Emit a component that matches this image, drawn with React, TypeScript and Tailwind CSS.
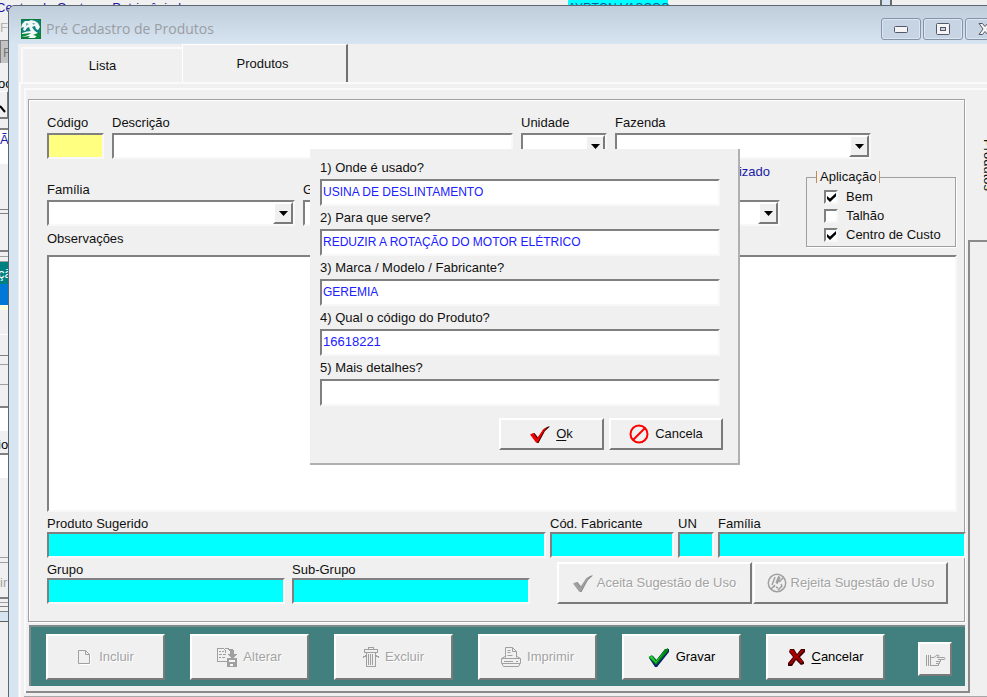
import type { ReactNode } from "react";

const sunken =
  "border-2 border-t-[#808080] border-l-[#808080] border-r-[#f8f8f8] border-b-[#f8f8f8]";
const raised =
  "border-2 border-t-white border-l-white border-r-[#7a7a7a] border-b-[#7a7a7a]";

type FieldProps = {
  id: string;
  label: string;
  className?: string;
  tone?: string;
};

function Field({ id, label, className = "", tone = "bg-white" }: FieldProps) {
  return (
    <div className={`flex flex-col ${className}`}>
      <label htmlFor={id} className="h-4 whitespace-nowrap">
        {label}
      </label>
      <input id={id} type="text" className={`h-[26px] w-full min-w-0 outline-none ${sunken} ${tone}`} />
    </div>
  );
}

function SelectField({ id, label, className = "" }: FieldProps) {
  return (
    <div className={`flex flex-col gap-0.5 ${className}`}>
      <label htmlFor={id} className="h-4 whitespace-nowrap">
        {label}
      </label>
      <div className="relative">
        <select
          id={id}
          defaultValue=""
          className={`block h-[26px] w-full appearance-none rounded-none bg-white outline-none ${sunken}`}
        >
          <option value=""></option>
        </select>
        <span
          className={`pointer-events-none absolute top-0.5 right-0.5 bottom-0.5 flex w-5 items-center justify-center bg-[#f0f0f0] ${raised}`}
        >
          <svg width="9" height="5" viewBox="0 0 9 5">
            <path d="M0 0h9L4.5 5z" fill="#000" />
          </svg>
        </span>
      </div>
    </div>
  );
}

function CheckBox({ id, label, checked }: { id: string; label: string; checked: boolean }) {
  return (
    <div className="flex h-[19px] items-center gap-2">
      <span className="relative flex">
        <input
          id={id}
          type="checkbox"
          defaultChecked={checked}
          className={`peer block h-[14px] w-[14px] appearance-none bg-white ${sunken}`}
        />
        <svg
          className="pointer-events-none absolute top-[3px] left-[3px] hidden peer-checked:block"
          width="9"
          height="9"
          viewBox="0 0 9 9"
        >
          <path d="M0 3l3 2.6L9 0v3.2L3 9 0 6z" fill="#000" />
        </svg>
      </span>
      <label htmlFor={id}>{label}</label>
    </div>
  );
}

function BarButton({ icon, children, disabled }: { icon: ReactNode; children: ReactNode; disabled?: boolean }) {
  return (
    <button
      type="button"
      disabled={disabled}
      className={`flex h-[46px] w-[119px] items-center justify-center gap-1.5 bg-[#f0f0f0] text-black disabled:text-[#a3a3a3] disabled:[text-shadow:1px_1px_0_#fff] ${raised}`}
    >
      {icon}
      <span>{children}</span>
    </button>
  );
}

function PageIcon() {
  return (
    <svg width="16" height="16" viewBox="0 0 16 16" fill="none" stroke="#a0a0a0">
      <path d="M1.5 1.500h7l4 4v9h-11zM8.500 1.500v4h4" />
      <path d="M2.500 15.500h11v-10" stroke="#fff" />
    </svg>
  );
}

function AlterIcon() {
  return (
    <svg width="20" height="20" viewBox="0 0 20 20" fill="none" stroke="#a0a0a0" shapeRendering="crispEdges">
      <path d="M10 14.500H.5v-13h6l1 1 1-1h3" />
      <path d="M2 4.500h2M5 4.500h2M2 7.500h3M6 7.500h3M2 10.500h2M5 10.500h3M8.500 3v3" />
      <path d="M11 2h4l2 2v3h3l-5 5-5-5h3V5z" fill="#a0a0a0" stroke="none" />
      <path d="M10 11h10v9H10z" fill="#a0a0a0" stroke="none" />
      <path d="M12 13h6v2h-6zM13 17h3v2h-3z" fill="#f6f6f6" stroke="none" />
    </svg>
  );
}

function TrashIcon() {
  return (
    <svg width="16" height="20" viewBox="0 0 16 20" fill="none" stroke="#a0a0a0" shapeRendering="crispEdges">
      <path d="M5.500 2.500v-2h5v2M1.500 2.500h13v3h-13zM3.500 6v13.500h9V6M5.500 7v11M7.500 7v11M9.500 7v11" />
      <path d="M2.500 8v1h-2v2M13.500 8v1h2v2" />
    </svg>
  );
}

function PrinterIcon() {
  return (
    <svg width="20" height="20" viewBox="0 0 20 20" fill="none" stroke="#a0a0a0">
      <path d="M4.500 10.500v-10h7l4 4v6M11.500.5v4h4M6.500 3.500h3M6.500 5.500h3M6.500 8.500h5M4 9.500l-3.500 2h19l-3.500-2M.5 11.500v5h19v-5M1.500 16.500v1.500l1 1.500h15l1-1.500v-1.500M3 14.500h9M15 14.500h2" />
    </svg>
  );
}

function GreenCheck() {
  return (
    <svg width="22" height="20" viewBox="0 0 22 20">
      <path d="M1 11l4-2 3.500 4L17 2l4 0v3L9 20H7z" fill="#08206a" />
      <path d="M.5 10L4 8l4 5.500L17 2.500l3-1.500v3L8 18z" fill="#008a10" />
      <path d="M1 10l3-1 4 5.500L18 2.500 8 16z" fill="#20d030" />
    </svg>
  );
}

function RedCross() {
  return (
    <svg width="18" height="18" viewBox="0 0 18 18">
      <path d="M3 1h4l3 5 4-5h4v3l-5 5 4 5v2l-3 1-5-5-4 6H1v-3l5-6-4-5z" fill="#400000" />
      <path d="M3 2l3-.5 4 6 4.500-5.500H17l-5.500 6.500L16 14l-2 1-5-5-4.500 6L2 16l5-7-4-5z" fill="#a80000" />
    </svg>
  );
}

function HandIcon() {
  return (
    <svg width="21" height="14" viewBox="0 0 21 14" fill="none" stroke="#a0a0a0">
      <path d="M1.500 1v11M3.500 1v11M5.500 1v11M6 3.500h3l3-2.500 2 .5-2 2h7.500l.5 1-.5 1H13M6 11.500h7.500v-2H11M13.500 9.500h1v-2H11M14.500 7.500h1v-2" />
    </svg>
  );
}

function SlimCheck({ dark, light }: { dark: string; light: string }) {
  return (
    <svg width="20" height="17" viewBox="0 0 20 17">
      <path d="M1 8.500L4.500 7 8 11.500 14 3l4-2.500h2L15 5 8.500 17H7z" fill={dark} />
      <path d="M0 8.500L3.500 7 7 12.500l6-9 4-2.500-3 4-6.500 11.500H6z" fill={light} />
    </svg>
  );
}

function ForbiddenIcon() {
  return (
    <svg width="20" height="20" viewBox="0 0 20 20" fill="none" stroke="#f00" strokeWidth="2">
      <circle cx="10" cy="10" r="8.500" />
      <path d="M4 16L16 4" />
    </svg>
  );
}

function RejectIcon() {
  return (
    <svg width="20" height="20" viewBox="0 0 20 20" fill="none" stroke="#a0a0a0" strokeWidth="1.500">
      <circle cx="10" cy="10" r="8.700" />
      <path d="M4 16L8 12M12 9l4-4M12 3L9 10M13 4l-3 7M8 4L5 12M6 14l2-1M9 14l2 1M14 11l1 2-4 4" />
    </svg>
  );
}

function AppIcon() {
  return (
    <svg width="20" height="20" viewBox="0 0 20 20">
      <path d="M0 0h20v20H0z" fill="#0a7d38" />
      <path d="M1 1h18v13H1z" fill="#127f80" />
      <path d="M1 5l3-3 4 0 2-1 4 1 3 2 2 4-2 3-2-1-1-3-3 1 2 3 2 2-3 1-3-3-1-3-2 1-2 3-2-1 1-3-3 1z" fill="#f1f8f6" />
      <path d="M5 4l3 1-3 2zM11 4l3 0-1 2z" fill="#6fb3b0" />
      <path d="M1 14c6-2 11-3 16 0l-5 2 4 1-2 2H7l2-2-8 1z" fill="#f4faf6" />
      <path d="M1 15l9-1-3 2-6 2zM14 16l5-2v5h-5l2-2z" fill="#0a8a3c" />
    </svg>
  );
}

type Strip = { h: string; look: string; text?: string };

const strips: Strip[] = [
  { h: "h-[24px]", look: "pt-1 text-[#b4b4b4]", text: "Fi" },
  { h: "h-[23px]", look: "bg-[#c3c3c3] border-t border-l border-[#808080] pl-0.5 pt-1 text-[#777]", text: "F" },
  { h: "h-[13px]", look: "bg-[#f0f0f0]" },
  { h: "h-[15px]", look: "text-black -indent-0.5", text: "oc" },
  { h: "h-[28px]", look: "border-t border-t-white border-r-2 border-b-2 border-[#7a7a7a]", text: "" },
  { h: "h-[9px]", look: "bg-[#f0f0f0]" },
  { h: "h-[36px]", look: "bg-white border-t-2 border-[#808080] pt-0.5 text-[#1a1aa6]", text: "Ã" },
  { h: "h-[46px]", look: "border-b border-[#808080]" },
  { h: "h-[4px]", look: "border-b border-[#808080]" },
  { h: "h-[38px]", look: "border-b-2 border-[#808080]" },
  { h: "h-[5px]", look: "border-b border-[#a0a0a0]" },
  { h: "h-[5px]", look: "border-b border-[#a0a0a0]" },
  { h: "h-[22px]", look: "bg-[#008080] text-white pt-1 -indent-0.5", text: "çã" },
  { h: "h-[21px]", look: "bg-[#0078d7]" },
  { h: "h-[5px]", look: "bg-[#ffffe1]" },
  { h: "h-[25px]", look: "border-b border-white" },
  { h: "h-[21px]", look: "border-b border-[#808080]" },
  { h: "h-[9px]", look: "border-b border-[#a0a0a0]" },
  { h: "h-[20px]", look: "border-b border-[#a0a0a0]" },
  { h: "h-[23px]", look: "border-b-2 border-[#808080]" },
  { h: "h-[23px]", look: "bg-white" },
  { h: "h-[6px]", look: "bg-[#f0f0f0]" },
  { h: "h-[18px]", look: "border-b-2 border-[#808080] text-black -indent-0.5", text: "io" },
  { h: "h-[23px]", look: "bg-white" },
  { h: "h-[80px]", look: "border-b border-[#a0a0a0]" },
  { h: "h-[5px]", look: "border-b border-[#a0a0a0]" },
  { h: "h-[36px]", look: "border-b-2 border-[#808080] pt-3 text-[#a0a0a0]", text: "ir" },
  { h: "h-[4px]", look: "border-b border-[#a0a0a0]" },
  { h: "h-[4px]", look: "border-b border-[#808080]" },
  { h: "h-[5px]", look: "border-b border-[#808080]" },
  { h: "h-[10px]", look: "bg-[#d7e4f2] border-b border-[#606060]" },
];

function BackWindow() {
  return (
    <div className="flex h-full flex-col bg-[#f0f0f0]">
      <div className="flex h-4 shrink-0 leading-4 text-[#1a1aa6]">
        <span className="-ml-1 w-[572px] whitespace-nowrap">Centro de Custo ou Patrimônio |</span>
        <span className="h-4 w-[100px] bg-[#00ffff] text-[12px] whitespace-nowrap text-[#0a5aa0]">
          AYRTON VASCOS
        </span>
        <span className="ml-auto h-4 w-3 border-x-2 border-[#6b6b6b] bg-[#d7e4f2]" />
        <span className="w-[95px]" />
      </div>
      <div className="flex w-[9px] flex-col leading-[15px]">
        {strips.map((s, i) => (
          <div key={i} className={`${s.h} ${s.look} shrink-0`}>
            {s.text === "" ? (
              <svg width="6" height="25" viewBox="0 0 6 25">
                <path d="M0 14l5 6" stroke="#000" strokeWidth="2" />
              </svg>
            ) : (
              s.text
            )}
          </div>
        ))}
      </div>
    </div>
  );
}

function TitleBar() {
  const control =
    "flex h-[22px] w-10 shrink-0 items-center justify-center rounded-[3px] border border-[#8593a8] bg-[#c6d4e3] shadow-[inset_0_0_0_1px_#dbe6f1]";
  return (
    <header className="flex h-[38px] items-center bg-linear-to-b from-[#bfcddb] to-[#d7e4f2] pt-2 pl-3">
      <AppIcon />
      <h1 className="ml-[5px] font-['Open_Sans',sans-serif] text-[14px] leading-5 text-[#9a9da2]">
        Pré Cadastro de Produtos
      </h1>
      <div className="-mr-[18px] ml-auto flex gap-0.5">
        <button type="button" aria-label="Minimizar" className={control}>
          <svg width="14" height="8" viewBox="0 0 14 8">
            <rect x="0.5" y="1.5" width="13" height="6" rx="1" fill="#f4f4f4" stroke="#55586a" />
          </svg>
        </button>
        <button type="button" aria-label="Maximizar" className={control}>
          <svg width="14" height="12" viewBox="0 0 14 12">
            <rect x="0.5" y="0.5" width="13" height="11" rx="1" fill="#f4f4f4" stroke="#55586a" />
            <rect x="4.5" y="4.5" width="5" height="3" fill="#c6d4e3" stroke="#55586a" />
          </svg>
        </button>
        <button type="button" aria-label="Fechar" className={control}>
          <svg width="14" height="12" viewBox="0 0 14 12">
            <path d="M1 .5h3.500L7 3.500 9.500.5H13L9 6l4 5.500H9.500L7 8.500l-2.500 3H1L5 6z" fill="#f4f4f4" stroke="#55586a" />
          </svg>
        </button>
      </div>
    </header>
  );
}

function ProductForm() {
  return (
    <section className="flex flex-1 flex-col border border-[#a0a0a0] pt-[15px] pr-[7px] pb-[17px] pl-[18px] shadow-[inset_1px_1px_0_#fff,1px_1px_0_#fff]">
      <div className="flex gap-2 pr-[86px]">
        <div className="flex w-[57px] flex-col gap-0.5">
          <label htmlFor="codigo" className="h-4">Código</label>
          <input id="codigo" type="text" className={`h-[26px] w-full bg-[#ffff80] outline-none ${sunken}`} />
        </div>
        <div className="flex flex-1 flex-col gap-0.5">
          <label htmlFor="descricao" className="h-4">Descrição</label>
          <input id="descricao" type="text" className={`h-[26px] w-full bg-white outline-none ${sunken}`} />
        </div>
        <SelectField id="unidade" label="Unidade" className="w-[86px]" />
        <SelectField id="fazenda" label="Fazenda" className="w-[256px]" />
      </div>

      <div className="flex gap-[26px] pr-px">
        <div className="flex flex-1 flex-col pt-[5px]">
          <div className="h-[18px] pr-[10px] text-right text-[#1a1aa6]">Utilizado</div>
          <div className="flex items-end gap-2">
            <SelectField id="familia" label="Família" className="w-[248px]" />
            <SelectField id="grupo" label="Grupo" className="flex-1" />
            <SelectField id="subgrupo" label="" className="flex-1" />
          </div>
          <label htmlFor="observacoes" className="mt-[5px] h-4">Observações</label>
        </div>
        <fieldset className="mt-2 h-20 w-[150px] border border-[#a0a0a0] pl-[17px] shadow-[1px_1px_0_#fff]">
          <legend className="-ml-2 flex h-5 items-center gap-[3px]">
            <span className="h-3 w-px bg-[#c08a50]" />
            Aplicação
            <span className="h-3 w-px bg-[#c08a50]" />
          </legend>
          <CheckBox id="bem" label="Bem" checked />
          <CheckBox id="talhao" label="Talhão" checked={false} />
          <CheckBox id="centro" label="Centro de Custo" checked />
        </fieldset>
      </div>

      <textarea id="observacoes" className={`mt-2 flex-1 resize-none bg-white outline-none ${sunken}`} />

      <div className="-mr-[9px] mt-1 flex gap-1">
        <Field id="sugerido" label="Produto Sugerido" className="flex-1" tone="bg-[#00ffff]" />
        <Field id="cod-fabricante" label="Cód. Fabricante" className="w-[124px]" tone="bg-[#00ffff]" />
        <Field id="un" label="UN" className="w-9" tone="bg-[#00ffff]" />
        <Field id="familia-sugerida" label="Família" className="w-[248px]" tone="bg-[#00ffff]" />
      </div>

      <div className="mt-1 flex gap-[7px] pr-[9px]">
        <Field id="grupo-sugerido" label="Grupo" className="w-[238px]" tone="bg-[#00ffff]" />
        <Field id="subgrupo-sugerido" label="Sub-Grupo" className="w-[238px]" tone="bg-[#00ffff]" />
        <div className="ml-auto flex gap-px">
          <button
            type="button"
            disabled
            className={`flex h-[42px] w-[195px] items-center justify-center gap-1 bg-[#f0f0f0] text-[#a3a3a3] [text-shadow:1px_1px_0_#fff] ${raised}`}
          >
            <SlimCheck dark="#8a8a8a" light="#a0a0a0" />
            Aceita Sugestão de Uso
          </button>
          <button
            type="button"
            disabled
            className={`flex h-[42px] w-[195px] items-center justify-center gap-1 bg-[#f0f0f0] text-[#a3a3a3] [text-shadow:1px_1px_0_#fff] ${raised}`}
          >
            <RejectIcon />
            Rejeita Sugestão de Uso
          </button>
        </div>
      </div>
    </section>
  );
}

function ActionBar() {
  return (
    <footer className="mt-[3px] ml-px flex h-[61px] items-center gap-[25px] border-t-2 border-l-2 border-[#7c8c8c] bg-[#427f7f] pr-[13px] pl-[15px]">
      <BarButton icon={<PageIcon />} disabled>Incluir</BarButton>
      <BarButton icon={<AlterIcon />} disabled>Alterar</BarButton>
      <BarButton icon={<TrashIcon />} disabled>Excluir</BarButton>
      <BarButton icon={<PrinterIcon />} disabled>Imprimir</BarButton>
      <BarButton icon={<GreenCheck />}>Gravar</BarButton>
      <BarButton icon={<RedCross />}>
        <span className="underline underline-offset-2">C</span>ancelar
      </BarButton>
      <button
        type="button"
        aria-label="Avançar"
        disabled
        className={`mt-1 ml-auto flex h-[34px] w-[34px] items-center justify-center bg-[#f0f0f0] pt-1 ${raised}`}
      >
        <HandIcon />
      </button>
    </footer>
  );
}

const questions = [
  { id: "q1", label: "1) Onde é usado?", value: "USINA DE DESLINTAMENTO", size: "text-[12px]" },
  { id: "q2", label: "2) Para que serve?", value: "REDUZIR A ROTAÇÃO DO MOTOR ELÉTRICO", size: "text-[12px]" },
  { id: "q3", label: "3) Marca / Modelo / Fabricante?", value: "GEREMIA", size: "text-[12px]" },
  { id: "q4", label: "4) Qual o código do Produto?", value: "16618221", size: "text-[13px]" },
  { id: "q5", label: "5) Mais detalhes?", value: "", size: "text-[13px]" },
];

function DetailsDialog() {
  return (
    <div
      role="dialog"
      aria-label="Detalhes do produto"
      className="absolute top-[149px] left-[310px] w-[430px] border-r-2 border-b-2 border-[#b0b0b0] bg-[#f0f0f0] pt-[11px] pr-[15px] pb-[13px] pl-[10px]"
    >
      {questions.map((q) => (
        <div key={q.id} className="mr-[3px] flex h-[50px] flex-col gap-[3px]">
          <label htmlFor={q.id} className="h-4">{q.label}</label>
          <input
            id={q.id}
            type="text"
            defaultValue={q.value}
            className={`h-[27px] w-full bg-white pb-0.5 pl-px text-[#2020ff] outline-none ${q.size} ${sunken}`}
          />
        </div>
      ))}
      <div className="mt-2 flex justify-end gap-[5px]">
        <button type="button" className={`flex h-8 w-[105px] items-center justify-center gap-1.5 bg-[#f0f0f0] ${raised}`}>
          <SlimCheck dark="#400000" light="#f00000" />
          <span>
            <span className="underline underline-offset-2">O</span>k
          </span>
        </button>
        <button type="button" className={`flex h-8 w-[114px] items-center justify-center gap-1.5 bg-[#f0f0f0] ${raised}`}>
          <ForbiddenIcon />
          Cancela
        </button>
      </div>
    </div>
  );
}

export default function App() {
  return (
    <div className="relative h-screen min-h-[600px] overflow-hidden font-['Liberation_Sans',Arial,sans-serif] text-[13px] leading-4 text-[#101010]">
      <BackWindow />
      <main className="absolute top-[5px] right-0 bottom-0 left-2 flex flex-col overflow-hidden rounded-tl-[7px] border-t border-l border-[#5f6670] bg-[#d7e4f2]">
        <TitleBar />
        <div className="ml-[9px] flex flex-1 flex-col bg-[#f0f0f0]">
          <div role="tablist" className="flex h-[38px] items-end pl-[3px]">
            <button
              type="button"
              role="tab"
              aria-selected="false"
              className="h-[35px] w-[161px] border-t-2 border-l-2 border-t-[#fafafa] border-l-[#fafafa] text-center"
            >
              Lista
            </button>
            <button
              type="button"
              role="tab"
              aria-selected="true"
              className="h-[38px] w-[166px] border-t border-r-2 border-l border-t-white border-r-[#707070] border-l-white pr-1 text-center"
            >
              Produtos
            </button>
          </div>
          <div className="ml-px flex flex-1 flex-col border-t-2 border-l-2 border-t-[#fafafa] border-l-[#fafafa] pt-1 pl-[3px]">
            <div className="flex flex-1 border-t-2 border-l-2 border-t-[#fafafa] border-l-[#fafafa]">
              <div className="flex flex-1 flex-col border-b-2 border-[#8a8a8a] pt-[9px] pr-[3px] pb-[5px] pl-[2px]">
                <ProductForm />
                <ActionBar />
              </div>
              <div className="flex w-[19px] flex-col">
                <button
                  type="button"
                  role="tab"
                  aria-selected="true"
                  className="flex h-[150px] items-center pl-3"
                >
                  <span className="shrink-0 leading-4 [writing-mode:vertical-rl]">Produtos</span>
                </button>
                <div className="flex-1 border-t-2 border-l-2 border-[#8a8a8a]" />
              </div>
            </div>
            <div className="mt-[3px] h-px bg-[#a8a8a8]" />
          </div>
        </div>
      </main>
      <DetailsDialog />
    </div>
  );
}
